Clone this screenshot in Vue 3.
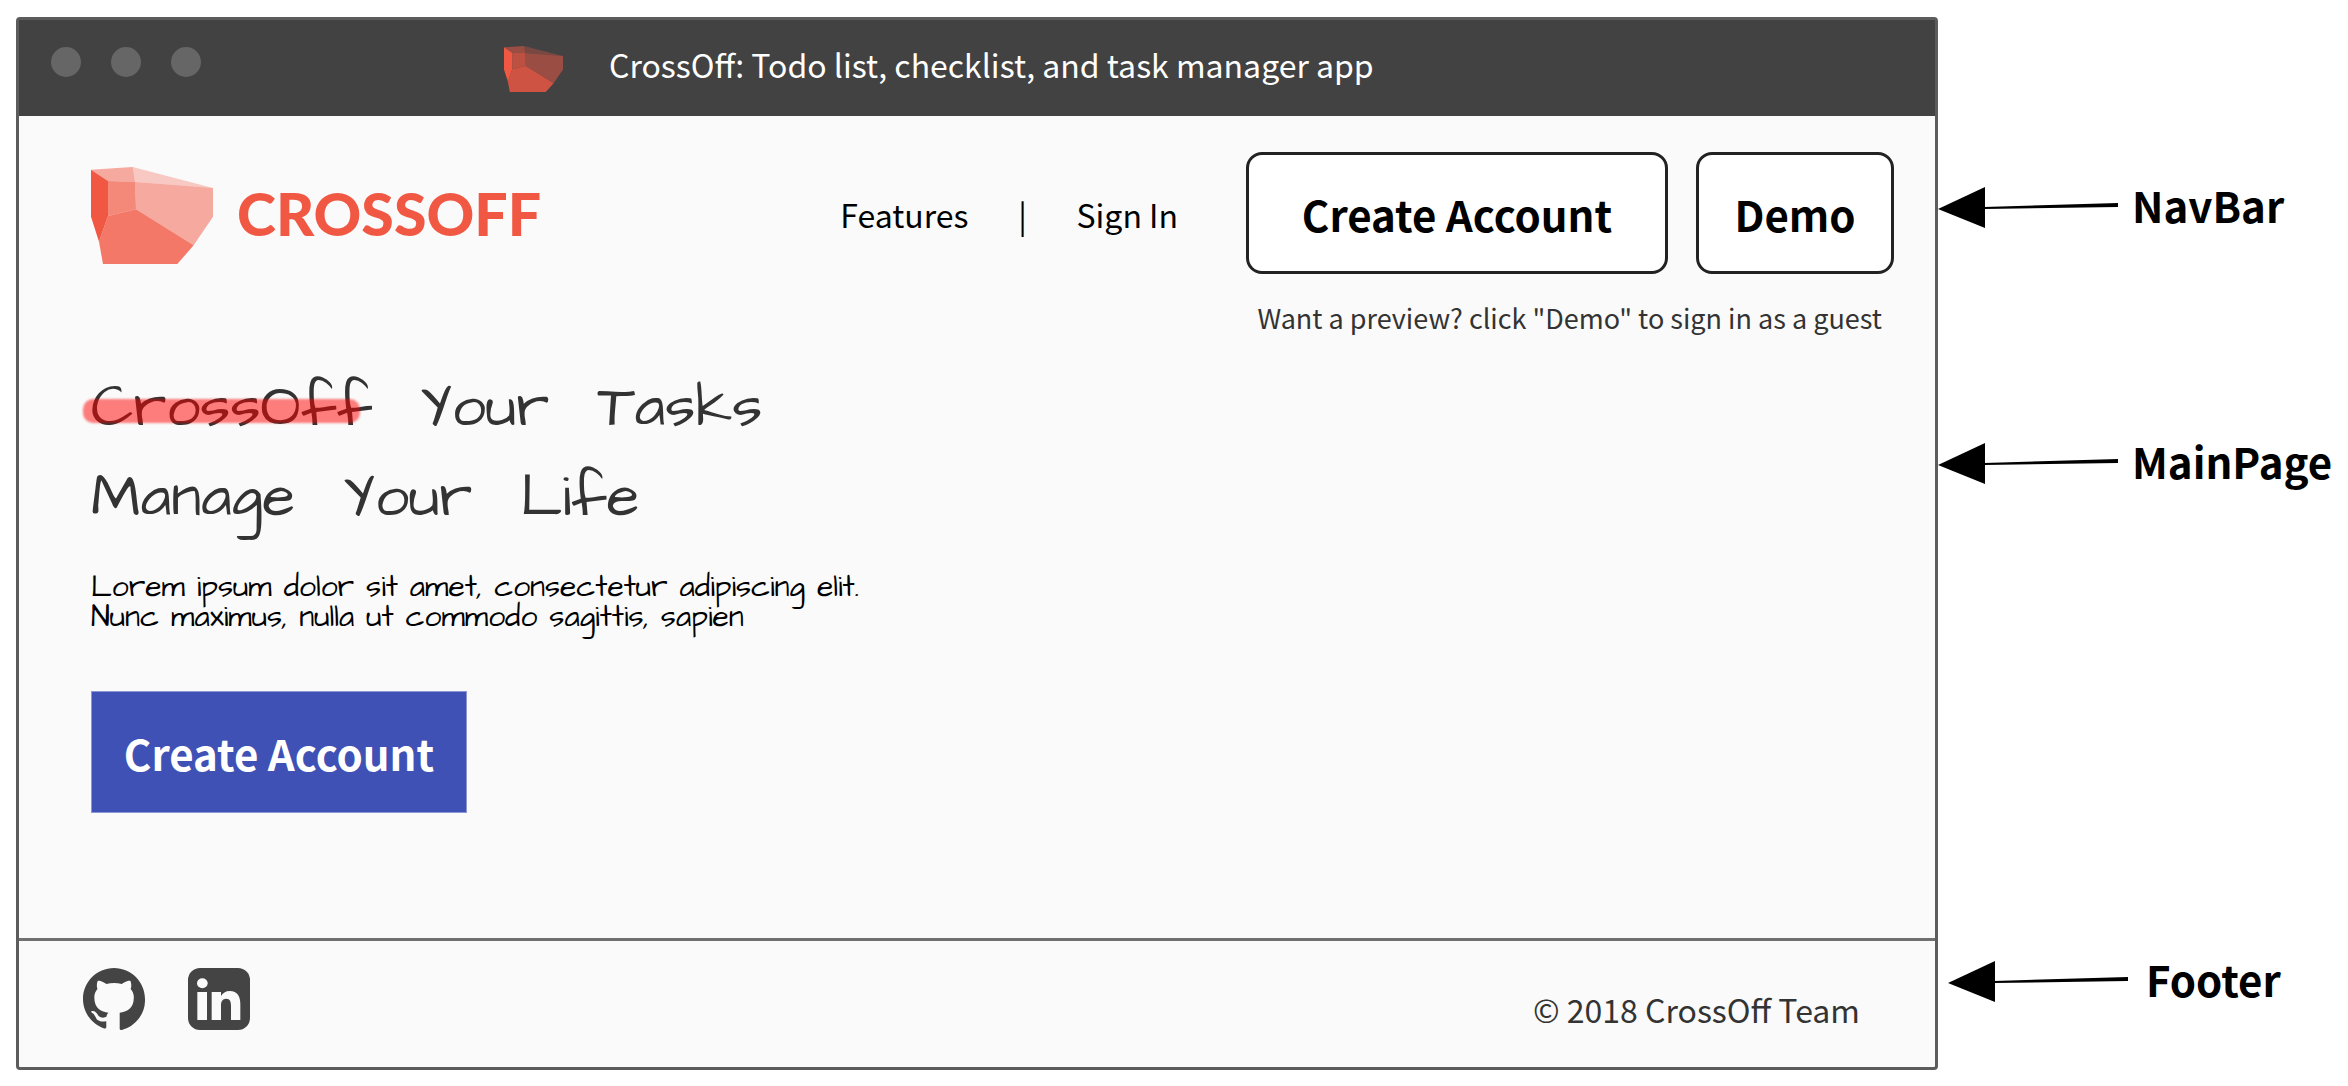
<script setup>
const facets = [
  { points: '93,89 218,81 225,126 144,123', opacity: 0.5 },
  { points: '218,81 459,144 225,126', opacity: 0.3 },
  { points: '93,89 144,123 144,228 117,305 93,230', opacity: 1 },
  { points: '144,123 225,126 228,208 144,228', opacity: 0.7 },
  { points: '225,126 459,144 459,230 401,316 228,208', opacity: 0.5 },
  { points: '144,228 228,208 401,316 352,372 129,372 117,305', opacity: 0.8 },
]
const headline = [
  ['CrossOff', 'Your', 'Tasks'],
  ['Manage', 'Your', 'Life'],
]
const notes = [
  { id: 'nav', label: 'NavBar' },
  { id: 'main', label: 'MainPage' },
  { id: 'foot', label: 'Footer' },
]
</script>

<template>
  <div class="board">
    <div class="window">
      <div class="titlebar">
        <div class="dots"><i></i><i></i><i></i></div>
        <svg class="favicon" viewBox="93 81 366 291" preserveAspectRatio="none" aria-hidden="true">
          <polygon v-for="f in facets" :key="f.points" :points="f.points" :fill-opacity="f.opacity" fill="#f15843" />
        </svg>
        <span class="title">CrossOff: Todo list, checklist, and task manager app</span>
      </div>

      <header class="navbar">
        <a class="brand" href="#">
          <svg class="mark" viewBox="93 81 366 291" preserveAspectRatio="none" aria-hidden="true">
            <polygon v-for="f in facets" :key="f.points" :points="f.points" :fill-opacity="f.opacity" fill="#f15843" />
          </svg>
          <span>CROSSOFF</span>
        </a>
        <nav class="links">
          <a href="#">Features</a>
          <span class="bar">|</span>
          <a href="#">Sign In</a>
        </nav>
        <div class="actions">
          <div class="buttons">
            <button class="outline create" type="button">Create Account</button>
            <button class="outline demo" type="button">Demo</button>
          </div>
          <p class="hint">Want a preview? click "Demo" to sign in as a guest</p>
        </div>
      </header>

      <main class="hero">
        <h1>
          <span v-for="(line, i) in headline" :key="i" class="line">
            <span v-for="word in line" :key="word" :class="{ struck: word === 'CrossOff' }">{{ word }}</span>
          </span>
        </h1>
        <p class="lead">
          Lorem ipsum dolor sit amet, consectetur adipiscing elit.<br />
          Nunc maximus, nulla ut commodo sagittis, sapien
        </p>
        <button class="primary" type="button">Create Account</button>
      </main>

      <footer class="footer">
        <div class="social">
          <a href="#" aria-label="GitHub">
            <svg viewBox="0 0 16 16" aria-hidden="true">
              <path fill="#444" d="M8 0C3.58 0 0 3.58 0 8c0 3.54 2.29 6.53 5.47 7.59.4.07.55-.17.55-.38 0-.19-.01-.82-.01-1.49-2.01.37-2.53-.49-2.69-.94-.09-.23-.48-.94-.82-1.13-.28-.15-.68-.52-.01-.53.63-.01 1.08.58 1.23.82.72 1.21 1.87.87 2.33.66.07-.52.28-.87.51-1.07-1.78-.2-3.64-.89-3.64-3.95 0-.87.31-1.59.82-2.15-.08-.2-.36-1.02.08-2.12 0 0 .67-.21 2.2.82.64-.18 1.32-.27 2-.27s1.36.09 2 .27c1.53-1.04 2.2-.82 2.2-.82.44 1.1.16 1.92.08 2.12.51.56.82 1.27.82 2.15 0 3.07-1.87 3.75-3.65 3.95v4.09c0 .21.15.46.55.38A8.01 8.01 0 0 0 16 8c0-4.42-3.58-8-8-8z" />
            </svg>
          </a>
          <a href="#" aria-label="LinkedIn">
            <svg viewBox="0 0 186 186" aria-hidden="true">
              <rect width="186" height="186" rx="36" fill="#444" />
              <g fill="#fafafa">
                <ellipse cx="43" cy="46" rx="16" ry="15" />
                <rect x="28" y="72" width="29" height="84" />
                <path d="M71 72h28v12c5-9 14-15 26-15 24 0 32 17 32 40v47h-28v-43c0-12-3-21-14-21-12 0-16 9-16 21v43H71z" />
              </g>
            </svg>
          </a>
        </div>
        <p class="copyright">© 2018 CrossOff Team</p>
      </footer>
    </div>

    <aside class="notes">
      <div v-for="n in notes" :key="n.id" class="note" :class="n.id">
        <svg viewBox="0 0 182 42" aria-hidden="true">
          <path d="M0 22 47 0v41z" />
          <path d="M46 20 180 16v4L46 22z" />
        </svg>
        <span>{{ n.label }}</span>
      </div>
    </aside>
  </div>
</template>

<style>
body {
  margin: 0;
  background: #fff;
}
</style>

<style scoped>
.board {
  display: flex;
  align-items: stretch;
  min-height: 100vh;
  box-sizing: border-box;
  padding: 17px 0 16px 16px;
  font-family: "Source Sans Pro", "Noto Sans CJK SC", sans-serif;
  font-size: 32px;
  line-height: 40px;
  color: #000;
}
p, h1 {
  margin: 0;
  font-weight: 400;
}
a {
  color: inherit;
  text-decoration: none;
}
button {
  box-sizing: border-box;
  height: 122px;
  padding: 2px 0 0;
  font: inherit;
  font-size: 42px;
  font-weight: 600;
}
svg {
  display: block;
}

.window {
  flex: 1;
  display: flex;
  flex-direction: column;
  border: 3px solid #5c5c5c;
  border-radius: 4px;
  background: #fafafa;
}
.titlebar {
  display: flex;
  align-items: center;
  height: 96px;
  background: #424242;
  color: #fff;
}
.dots {
  display: flex;
  gap: 30px;
  margin: 0 303px 12px 32px;
}
.dots i {
  width: 30px;
  height: 30px;
  border-radius: 50%;
  background: #666;
}
.favicon {
  width: 59px;
  height: 46px;
  margin: 2px 46px 0 0;
}
.title {
  padding-bottom: 8px;
}

.navbar {
  display: flex;
  align-items: flex-start;
  padding: 36px 41px 0 72px;
}
.brand {
  display: flex;
  align-items: center;
  gap: 24px;
  padding-top: 15px;
  font: 900 59px/64px Lato, sans-serif;
  color: #f15843;
}
.brand span {
  padding-bottom: 4px;
}
.mark {
  width: 122px;
  height: 97px;
}
.links {
  display: flex;
  margin: 42px 68px 0 auto;
}
.links .bar {
  width: 108px;
  text-align: center;
}
.buttons {
  display: flex;
  gap: 28px;
}
.outline {
  border: 3px solid #222;
  border-radius: 16px;
  background: #fff;
  color: #000;
}
.create {
  width: 422px;
}
.demo {
  width: 198px;
}
.hint {
  padding: 24px 12px 0 0;
  font-size: 27px;
  text-align: right;
  color: #333;
}

.hero {
  flex: 1;
  padding: 25px 72px 0;
  font-family: "Architects Daughter", "DejaVu Sans", sans-serif;
}
h1 {
  font-size: 60px;
  font-weight: 200;
  line-height: 90px;
  color: #333;
}
.line {
  display: flex;
  gap: 48px;
}
.struck {
  position: relative;
}
.struck::after {
  content: "";
  position: absolute;
  left: -8px;
  right: 12px;
  top: 36px;
  height: 24px;
  border-radius: 10px;
  background: rgba(255, 0, 0, 0.5);
  filter: blur(1px);
}
.lead {
  padding: 29px 0 59px;
  font-size: 30px;
  font-weight: 200;
  line-height: 30px;
}
.primary {
  width: 376px;
  border: 1px solid #8c97d3;
  background: #3f51b5;
  font-family: "Source Sans Pro", "Noto Sans CJK SC", sans-serif;
  color: #fff;
}

.footer {
  display: flex;
  align-items: flex-start;
  justify-content: space-between;
  box-sizing: border-box;
  height: 129px;
  padding: 27px 75px 0 64px;
  border-top: 3px solid #707070;
}
.social {
  display: flex;
  gap: 43px;
}
.social svg {
  width: 62px;
  height: 62px;
}
.copyright {
  padding-top: 21px;
  color: #333;
}

.notes {
  display: flex;
  flex-direction: column;
  width: 410px;
  font-size: 42px;
  font-weight: 600;
}
.note {
  display: flex;
  align-items: center;
  gap: 12px;
  height: 60px;
}
.note span {
  padding-bottom: 6px;
}
.note svg {
  width: 182px;
  height: 42px;
}
.nav {
  margin-top: 161px;
}
.main {
  margin-top: 196px;
}
.foot {
  gap: 16px;
  margin: auto 0 58px 10px;
}
</style>
